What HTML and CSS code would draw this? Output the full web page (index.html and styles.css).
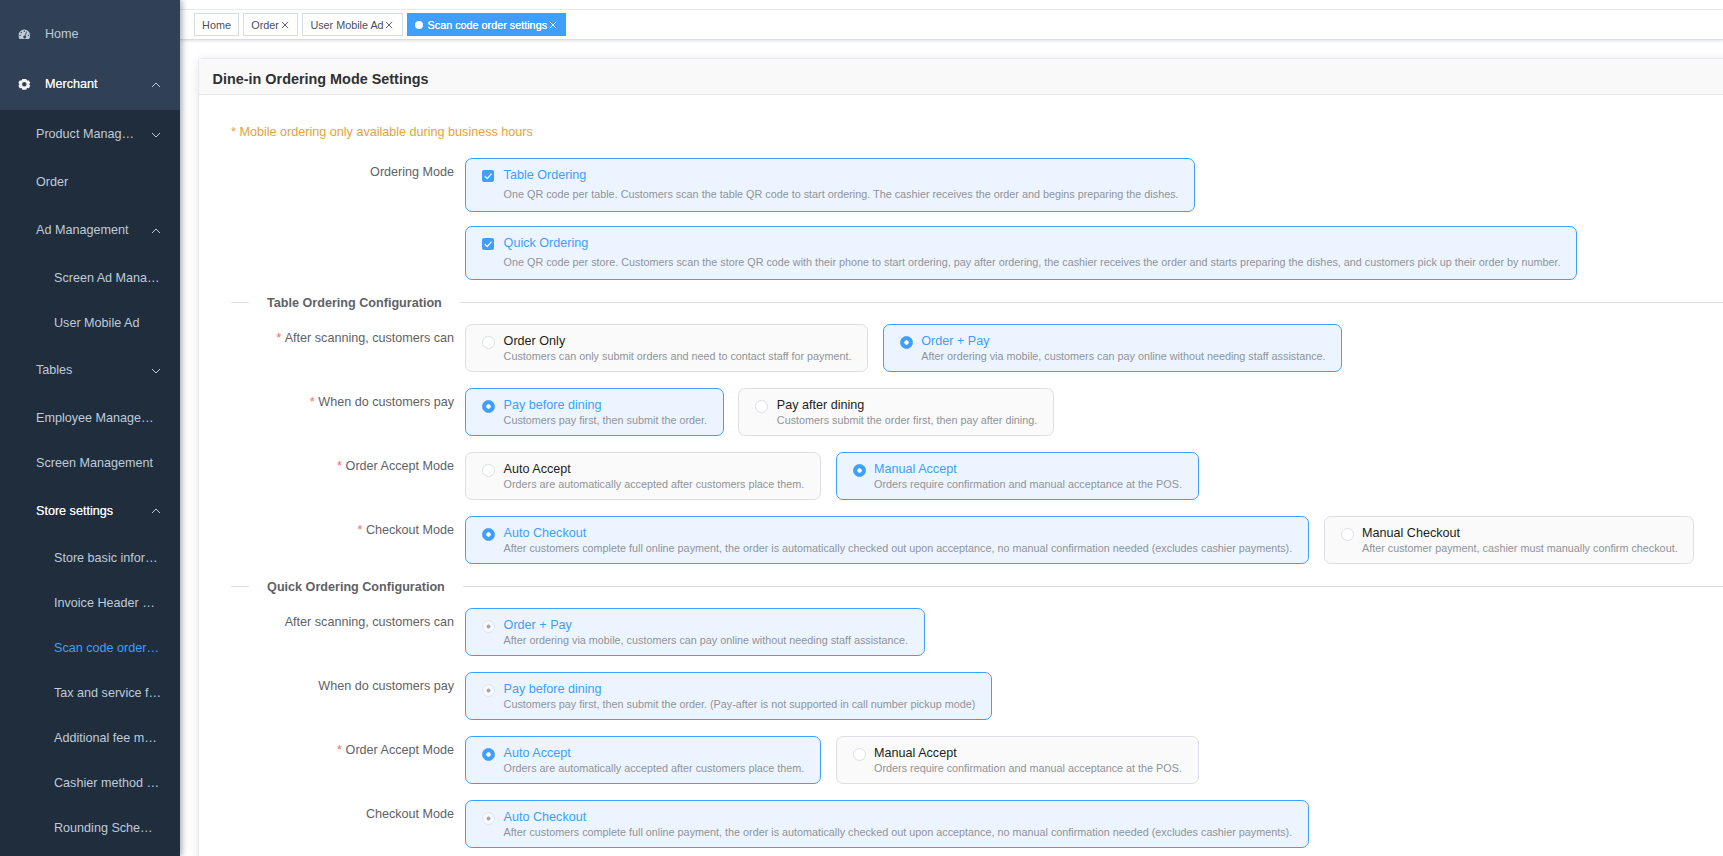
FILE: index.html
```html
<!DOCTYPE html>
<html lang="en">
<head>
<meta charset="utf-8">
<title>Scan code order settings</title>
<link rel="stylesheet" href="styles.css">
</head>
<body>
<svg class="defs" width="0" height="0" aria-hidden="true">
  <symbol id="chev" viewBox="0 0 10 6"><path d="M1 5 5 1l4 4" fill="none" stroke="currentColor" stroke-width="1"/></symbol>
  <symbol id="x" viewBox="0 0 8 8"><path d="M.8.8l6.4 6.4M7.2.8.8 7.2" fill="none" stroke="currentColor" stroke-width=".9"/></symbol>
  <symbol id="check" viewBox="0 0 12 12"><path d="M2.800 6.100l2.500 2.500 4.200-4.900" fill="none" stroke="#fff" stroke-width="1.200"/></symbol>
</svg>
<div class="app">
  <nav class="sidebar">
    <div class="top-menu">
      <a class="item title root home"><svg class="icon" viewBox="0 0 14 14"><path fill="currentColor" fill-rule="evenodd" d="M7 1.6A6.4 6.4 0 0 0 .6 8c0 1.6.4 3 1.100 4.200h10.600A8 8 0 0 0 13.400 8 6.400 6.400 0 0 0 7 1.600ZM7 2.900a.8.8 0 1 1 0 1.600.8.8 0 0 1 0-1.600ZM3.700 4.100a.8.8 0 1 1 0 1.600.8.8 0 0 1 0-1.600ZM2.400 7.400a.8.8 0 1 1 0 1.600.8.8 0 0 1 0-1.600ZM11.600 7.400a.8.8 0 1 1 0 1.600.8.8 0 0 1 0-1.600ZM9.300 4l.8.3-1.700 4.400a1.600 1.600 0 1 1-.9-.3Z"/></svg><span>Home</span></a>
      <a class="item title root open"><svg class="icon" viewBox="0 0 14 14"><path fill="currentColor" fill-rule="evenodd" d="M4.800 1h4.400l.8 1.900 2.100-.2 1.500 2.600L12.400 7l1.200 1.700-1.500 2.600-2.100-.2L9.200 13H4.800L4 11.100l-2.100.2L.4 8.700 1.600 7 .4 5.300l1.500-2.600 2.100.2ZM7 4.500a2.500 2.500 0 1 0 0 5 2.500 2.500 0 0 0 0-5Z"/></svg><span>Merchant</span><svg class="arrow"><use href="#chev"/></svg></a>
    </div>
    <div class="submenu">
      <a class="item title"><span>Product Manag…</span><svg class="arrow down"><use href="#chev"/></svg></a>
      <a class="item"><span>Order</span></a>
      <a class="item title"><span>Ad Management</span><svg class="arrow"><use href="#chev"/></svg></a>
      <a class="item deep"><span>Screen Ad Mana…</span></a>
      <a class="item deep"><span>User Mobile Ad</span></a>
      <a class="item title"><span>Tables</span><svg class="arrow down"><use href="#chev"/></svg></a>
      <a class="item"><span>Employee Manage…</span></a>
      <a class="item"><span>Screen Management</span></a>
      <a class="item title open"><span>Store settings</span><svg class="arrow"><use href="#chev"/></svg></a>
      <a class="item deep"><span>Store basic infor…</span></a>
      <a class="item deep"><span>Invoice Header …</span></a>
      <a class="item deep current"><span>Scan code order…</span></a>
      <a class="item deep"><span>Tax and service f…</span></a>
      <a class="item deep"><span>Additional fee m…</span></a>
      <a class="item deep"><span>Cashier method …</span></a>
      <a class="item deep"><span>Rounding Sche…</span></a>
    </div>
  </nav>
  <main class="main">
    <header class="navbar"></header>
    <div class="tabs">
      <a class="tab">Home</a>
      <a class="tab">Order<svg class="close"><use href="#x"/></svg></a>
      <a class="tab">User Mobile Ad<svg class="close"><use href="#x"/></svg></a>
      <a class="tab active"><i class="dot"></i>Scan code order settings<svg class="close"><use href="#x"/></svg></a>
    </div>
    <section class="card">
      <h1 class="card-head">Dine-in Ordering Mode Settings</h1>
      <div class="card-body">
        <p class="note">* Mobile ordering only available during business hours</p>

        <div class="row modes">
          <label class="label">Ordering Mode</label>
          <div class="options stack">
            <div class="option tall on"><svg class="box"><use href="#check"/></svg><div><b>Table Ordering</b><p>One QR code per table. Customers scan the table QR code to start ordering. The cashier receives the order and begins preparing the dishes.</p></div></div>
            <div class="option tall on"><svg class="box"><use href="#check"/></svg><div><b>Quick Ordering</b><p>One QR code per store. Customers scan the store QR code with their phone to start ordering, pay after ordering, the cashier receives the order and starts preparing the dishes, and customers pick up their order by number.</p></div></div>
          </div>
        </div>

        <h2 class="divider">Table Ordering Configuration</h2>
        <div class="row">
          <label class="label req">After scanning, customers can</label>
          <div class="options">
            <div class="option"><i class="radio"></i><div><b>Order Only</b><p>Customers can only submit orders and need to contact staff for payment.</p></div></div>
            <div class="option on"><i class="radio"></i><div><b>Order + Pay</b><p>After ordering via mobile, customers can pay online without needing staff assistance.</p></div></div>
          </div>
        </div>
        <div class="row">
          <label class="label req">When do customers pay</label>
          <div class="options">
            <div class="option on"><i class="radio"></i><div><b>Pay before dining</b><p>Customers pay first, then submit the order.</p></div></div>
            <div class="option"><i class="radio"></i><div><b>Pay after dining</b><p>Customers submit the order first, then pay after dining.</p></div></div>
          </div>
        </div>
        <div class="row">
          <label class="label req">Order Accept Mode</label>
          <div class="options">
            <div class="option"><i class="radio"></i><div><b>Auto Accept</b><p>Orders are automatically accepted after customers place them.</p></div></div>
            <div class="option on"><i class="radio"></i><div><b>Manual Accept</b><p>Orders require confirmation and manual acceptance at the POS.</p></div></div>
          </div>
        </div>
        <div class="row last">
          <label class="label req">Checkout Mode</label>
          <div class="options">
            <div class="option on"><i class="radio"></i><div><b>Auto Checkout</b><p>After customers complete full online payment, the order is automatically checked out upon acceptance, no manual confirmation needed (excludes cashier payments).</p></div></div>
            <div class="option"><i class="radio"></i><div><b>Manual Checkout</b><p>After customer payment, cashier must manually confirm checkout.</p></div></div>
          </div>
        </div>

        <h2 class="divider">Quick Ordering Configuration</h2>
        <div class="row">
          <label class="label">After scanning, customers can</label>
          <div class="options">
            <div class="option on locked"><i class="radio"></i><div><b>Order + Pay</b><p>After ordering via mobile, customers can pay online without needing staff assistance.</p></div></div>
          </div>
        </div>
        <div class="row">
          <label class="label">When do customers pay</label>
          <div class="options">
            <div class="option on locked"><i class="radio"></i><div><b>Pay before dining</b><p>Customers pay first, then submit the order. (Pay-after is not supported in call number pickup mode)</p></div></div>
          </div>
        </div>
        <div class="row">
          <label class="label req">Order Accept Mode</label>
          <div class="options">
            <div class="option on"><i class="radio"></i><div><b>Auto Accept</b><p>Orders are automatically accepted after customers place them.</p></div></div>
            <div class="option"><i class="radio"></i><div><b>Manual Accept</b><p>Orders require confirmation and manual acceptance at the POS.</p></div></div>
          </div>
        </div>
        <div class="row">
          <label class="label">Checkout Mode</label>
          <div class="options">
            <div class="option on locked"><i class="radio"></i><div><b>Auto Checkout</b><p>After customers complete full online payment, the order is automatically checked out upon acceptance, no manual confirmation needed (excludes cashier payments).</p></div></div>
          </div>
        </div>
      </div>
    </section>
  </main>
</div>
</body>
</html>
```

FILE: styles.css
```css
* { box-sizing: border-box; }

body {
  margin: 0;
  height: 856px;
  overflow: hidden;
  background: #fff;
  font-family: "Liberation Sans", Arial, sans-serif;
  font-size: 12.6px;
  color: #606266;
}

.defs { display: block; }
p, h1, h2 { margin: 0; }

.app {
  display: flex;
  height: 856px;
  overflow: hidden;
}

/* Sidebar */
.sidebar {
  flex: 0 0 180px;
  z-index: 1;
  background: #1f2d3d;
  box-shadow: 2px 0 6px rgba(0, 21, 41, .35);
}

.top-menu {
  height: 110px;
  padding-top: 9px;
  background: #304156;
}

.item {
  display: flex;
  align-items: center;
  height: 45px;
  padding: 0 19px 0 36px;
  color: #bfcbd9;
  white-space: nowrap;
}

.item span { padding-bottom: 1.500px; }
.item.home span { padding-bottom: 0; }
.item.title { height: 50.4px; }
.item.deep { padding-left: 54px; }
.item.root { padding-left: 18px; }
.item.open { color: #f4f4f5; text-shadow: 0 0 .4px #f4f4f5; }
.item.current { color: #409eff; }

.icon {
  width: 12.6px;
  height: 12.6px;
  margin: 0 14.400px 0 0;
}

.arrow {
  width: 10px;
  height: 6px;
  margin-left: auto;
  color: #bfcbd9;
}

.arrow.down { transform: rotate(180deg); }

/* Top bars */
.main {
  flex: 1;
  min-width: 0;
  overflow: hidden;
}

.navbar {
  height: 10px;
  border-bottom: 1px solid #eceef0;
}

.tabs {
  display: flex;
  gap: 4.400px;
  height: 30px;
  padding: 3px 0 0 14px;
  border-bottom: 1px solid #d8dce5;
  box-shadow: 0 1px 3px rgba(0, 0, 0, .12);
}

.tab {
  display: flex;
  align-items: center;
  height: 23px;
  padding: 0 7px;
  border: 1px solid #d8dce5;
  color: #495060;
  font-size: 10.8px;
  white-space: nowrap;
}

.tab.active {
  background: #409eff;
  border-color: #409eff;
  color: #fff;
  text-shadow: 0 0 .3px #fff;
}

.close {
  width: 8px;
  height: 8px;
  margin: 0 1.300px 0 1.800px;
}

.dot {
  width: 8px;
  height: 8px;
  margin-right: 4.500px;
  border-radius: 50%;
  background: #fff;
}

/* Settings card */
.card {
  width: 1700px;
  height: 900px;
  margin: 18px 0 0 18px;
  border: 1px solid #e6e8ee;
  border-radius: 3.600px;
  box-shadow: 0 2px 11px rgba(0, 0, 0, .1);
  background: #fff;
}

.card-head {
  height: 36px;
  padding-left: 13.500px;
  border-bottom: 1px solid #e4e7ed;
  background: #f9f9f9;
  color: #303133;
  font-size: 14.400px;
  line-height: 40px;
}

.card-body { padding: 30px 0 0 32px; }

.note {
  height: 33px;
  line-height: 15px;
  color: #e6a23c;
}

.row {
  display: flex;
  gap: 11px;
  height: 48px;
  margin-bottom: 16px;
}

.row.last { margin-bottom: 14.500px; }

.row.modes {
  height: 122px;
  margin-bottom: 14.500px;
}

.label {
  flex: 0 0 223px;
  line-height: 28px;
  text-align: right;
}

.req::before {
  content: "*";
  margin-right: 3.600px;
  color: #f56c6c;
}

.options {
  display: flex;
  gap: 14.500px;
  align-items: flex-start;
}

.stack {
  flex-direction: column;
  gap: 14px;
}

.option {
  display: flex;
  height: 48px;
  padding: 0 15.800px 0 16px;
  border: 1px solid #dcdfe6;
  border-radius: 7px;
  background: #fafafa;
  white-space: nowrap;
}

.option.tall { height: 54px; }

.option.on {
  border-color: #409eff;
  background: #ecf5ff;
}

.option b {
  display: block;
  padding-top: 8px;
  color: #1d1e20;
  font-weight: 400;
  line-height: 16px;
}

.option.on b { color: #409eff; }

.option p {
  color: #909399;
  font-size: 10.800px;
  line-height: 15px;
}

.tall p { padding-top: 4px; }

.radio,
.box {
  flex: none;
  width: 12px;
  height: 12px;
  margin: 11px 9.500px 0 0;
}

.box {
  border-radius: 2px;
  background: #409eff;
}

.radio {
  width: 13px;
  height: 13px;
  margin-right: 8.500px;
  border: 1px solid #dcdfe6;
  border-radius: 50%;
  background: #fff;
}

.on .radio {
  border-color: #409eff;
  background: radial-gradient(circle, #fff 1.900px, #409eff 2.500px);
}

.locked .radio {
  border-color: #e4e7ed;
  background: radial-gradient(circle, #a3a9b3 1.700px, #f5f7fa 2.300px);
}

.divider {
  display: flex;
  align-items: center;
  gap: 18px;
  height: 16px;
  margin-bottom: 13.500px;
  color: #606266;
  font-size: 12.600px;
  font-weight: 700;
  line-height: 16px;
}

.divider::before,
.divider::after {
  content: "";
  width: 18px;
  height: 1px;
  background: #dcdfe6;
}

.divider::after { flex: 1; }
```
